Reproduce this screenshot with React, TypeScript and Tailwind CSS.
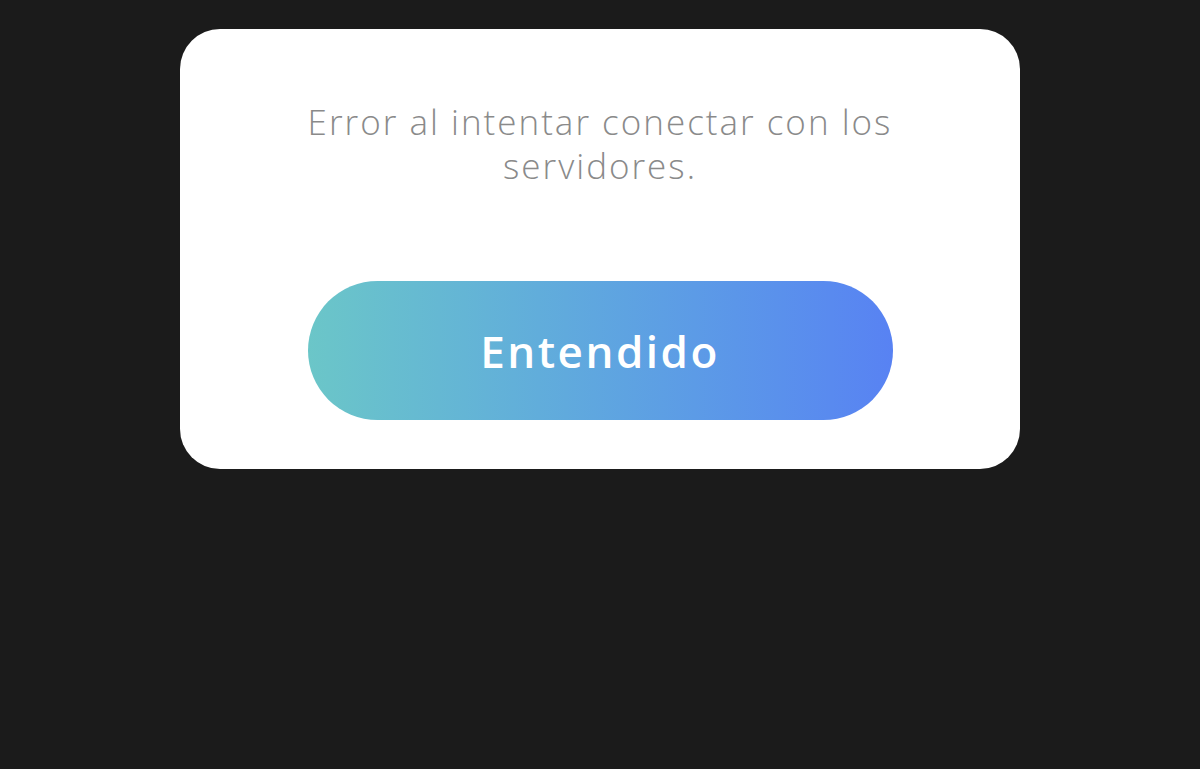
export default function App() {
  return (
    <div className="min-h-screen bg-[#1b1b1b] pt-[29px]">
      <div className="mx-auto flex w-[840px] flex-col items-center rounded-[40px] bg-white pt-[71px] pb-[49px]">
        <p className="w-[680px] text-center font-['Open_Sans',sans-serif] text-[35px] font-light leading-[44px] tracking-[2px] text-[#8a8a8a]">
          Error al intentar conectar con los servidores.
        </p>
        <button className="mt-[93px] h-[139px] w-[585px] rounded-full bg-linear-to-r from-[#6bc6c8] to-[#5882f3] font-['Open_Sans',sans-serif] text-[44px] font-semibold tracking-[2.5px] text-white">
          Entendido
        </button>
      </div>
    </div>
  );
}
